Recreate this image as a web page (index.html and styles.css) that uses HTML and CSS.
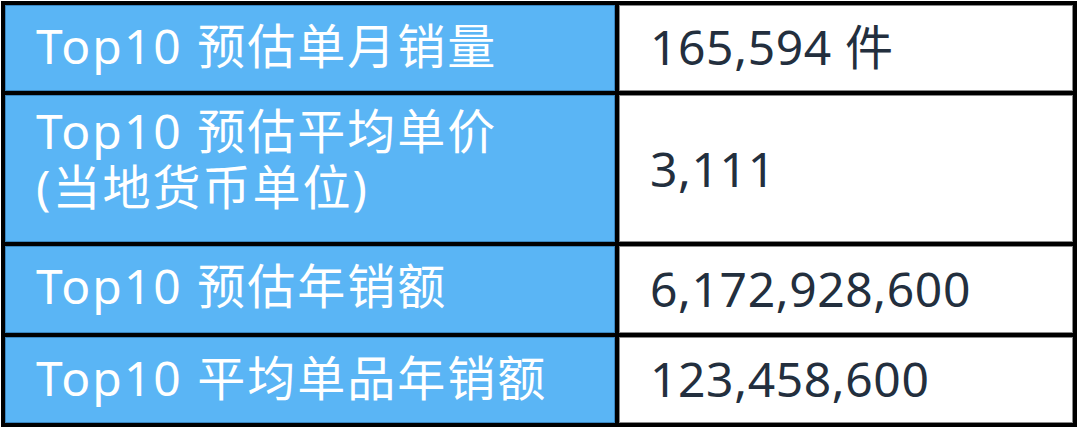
FILE: index.html
```html
<!DOCTYPE html>
<html lang="zh-CN">
<head>
<meta charset="utf-8">
<link rel="stylesheet" href="styles.css">
</head>
<body>
<table class="stats">
  <tr class="row-1">
    <th class="label">Top10 预估单月销量</th>
    <td class="value">165,594 件</td>
  </tr>
  <tr class="row-2">
    <th class="label">Top10 预估平均单价<br>(当地货币单位)</th>
    <td class="value">3,111</td>
  </tr>
  <tr class="row-3">
    <th class="label">Top10 预估年销额</th>
    <td class="value">6,172,928,600</td>
  </tr>
  <tr class="row-4">
    <th class="label">Top10 平均单品年销额</th>
    <td class="value">123,458,600</td>
  </tr>
</table>
</body>
</html>
```
FILE: styles.css
```css
html, body {
  margin: 0;
  padding: 0;
  background: #ffffff;
}

body {
  padding: 1px 0 0 1px;
}

.stats {
  border-collapse: separate;
  border-spacing: 4px;
  background: #000000;
  font-family: "Noto Sans", "Noto Sans CJK SC", sans-serif;
  font-size: 48px;
  line-height: 55px;
}

.stats th,
.stats td {
  box-sizing: border-box;
  padding: 0 0 0 30px;
  text-align: left;
  vertical-align: middle;
  font-weight: normal;
  white-space: nowrap;
}

.label {
  width: 610px;
  background: #5ab5f5;
  color: #ffffff;
  border: 1px solid #3a86c0;
  letter-spacing: 2px;
}

.value {
  width: 454px;
  background: #ffffff;
  color: #232f3e;
  border: 1px solid #8a8a8a;
  letter-spacing: 0.6px;
}

.row-1 th, .row-1 td { height: 86px; }
.row-2 th, .row-2 td { height: 147px; }
.row-3 th, .row-3 td { height: 87px; }
.row-4 th, .row-4 td { height: 86px; }

.row-1 .label { padding-bottom: 6px; }
.row-1 .value { padding-bottom: 4px; }
.row-2 .label { padding-bottom: 20px; line-height: 56px; }
.row-2 .value { padding-bottom: 0; }
.row-3 .label { padding-bottom: 9px; }
.row-3 .value { padding-bottom: 2px; }
.row-4 .label { padding-bottom: 6px; }
.row-4 .value { padding-bottom: 4px; }
```
